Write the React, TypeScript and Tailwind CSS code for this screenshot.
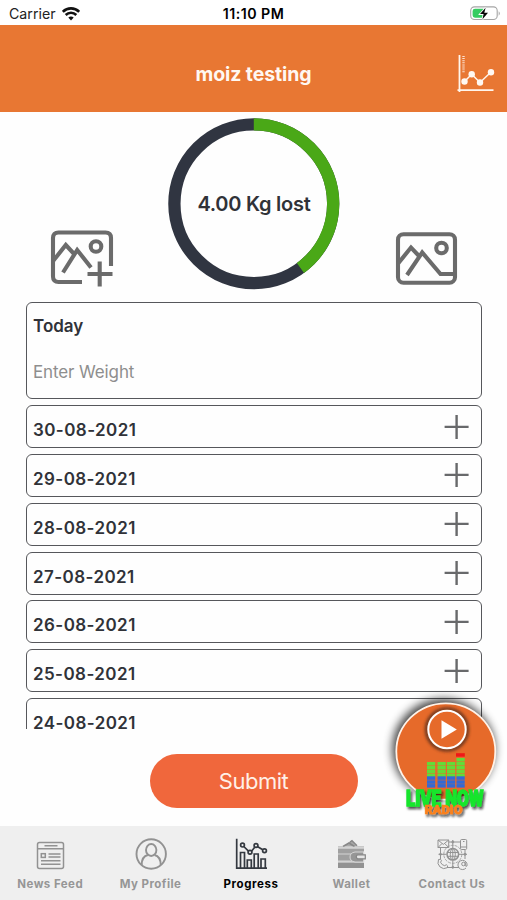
import type { ReactNode } from 'react';

const DATES = ['30-08-2021', '29-08-2021', '28-08-2021', '27-08-2021', '26-08-2021', '25-08-2021', '24-08-2021'];

function StatusBar() {
  return (
    <div className="grid h-[25px] shrink-0 grid-cols-3 items-center bg-white pt-[2px] text-black">
      <div className="flex items-center gap-[6px] pl-[9px]">
        <span className="text-[14.2px] leading-5 text-[#222]">Carrier</span>
        <svg width="18" height="14" viewBox="0 0 18 14" fill="none" stroke="#111" strokeWidth="2.6">
          <path d="M0.8 4.8C5.4 .2 12.6 .2 17.2 4.8" />
          <path d="M3.7 8C6.7 5 11.3 5 14.3 8" />
          <path d="M9 13.5 6.3 10.6Q9 8.5 11.7 10.6Z" fill="#111" stroke="none" />
        </svg>
      </div>
      <div className="text-center text-[14.2px] font-semibold leading-5 tracking-[0.5px]">11:10 PM</div>
      <div className="flex justify-end pr-[6px]">
        <svg width="31" height="15" viewBox="0 0 31 15">
          <rect x=".7" y=".9" width="26.5" height="12.6" rx="3.8" fill="white" stroke="#a5a5a5" strokeWidth="1.1" />
          <path d="M5 2.7h8.5v9H5a2.5 2.5 0 0 1-2.4-2.5V5A2.5 2.5 0 0 1 5 2.7" fill="#36cc61" />
          <path d="M28.7 5.2q2.2 2.2 0 4.5z" fill="#a5a5a5" />
          <path d="M15.6 1.8 10 8.1h3.6l-1.1 5.1 5.5-6.5h-3.7z" fill="#080808" stroke="white" strokeWidth="1.7" paintOrder="stroke" />
        </svg>
      </div>
    </div>
  );
}

function Header() {
  return (
    <header className="grid h-[87px] shrink-0 grid-cols-[80px_1fr_80px] items-center bg-[#e87733] pt-[11px]">
      <span />
      <h1 className="text-center text-[19.5px] font-bold leading-6 tracking-[-0.1px] text-[#fff8f2]">moiz testing</h1>
      <svg className="ml-[28px] mt-[2px]" width="40" height="40" viewBox="0 0 40 40" fill="none" stroke="#fff5ec">
        <path d="M4.5 0v37M2.5 35.2h36" strokeWidth="1.8" />
        <path d="M8.5 1v17" strokeWidth="2.4" strokeDasharray="1 1.1" opacity=".85" />
        <path d="M9.5 26.5 16.7 19.3 25 27.5 35.8 17.3" strokeWidth="1.5" />
        <g fill="#fff8f2" stroke="none">
          <circle cx="9.5" cy="26.5" r="3.2" />
          <circle cx="16.7" cy="19.3" r="3.2" />
          <circle cx="25" cy="27.5" r="3.2" />
          <circle cx="36" cy="17.3" r="3.2" />
        </g>
      </svg>
    </header>
  );
}

function AddPhotoIcon() {
  return (
    <svg width="66" height="60" viewBox="0 0 66 60" fill="none" stroke="#6b6b6b" strokeWidth="4.1">
      <path d="M32 53H8.5Q3 53 3 47.5V9q0-5.5 5.5-5.5h47q5.5 0 5.5 5.5v28" />
      <path d="M3.5 31.5 15.8 16 25 26" />
      <path d="M13 43.5 27.2 21 41 38.5" />
      <circle cx="46" cy="17.5" r="5.3" />
      <path d="M49.7 32.5v25M37.5 45H62.5" />
    </svg>
  );
}

function PhotoIcon() {
  return (
    <svg width="66" height="60" viewBox="0 0 66 60" fill="none" stroke="#6b6b6b" strokeWidth="4.1">
      <rect x="3" y="4.2" width="57" height="48.5" rx="5.5" />
      <path d="M3.5 33 16 17.5 24 26" />
      <path d="M12 45 27.2 22.5 45.5 44H60" />
      <circle cx="46.5" cy="18" r="5.3" />
    </svg>
  );
}

function Summary() {
  return (
    <section className="grid h-[189px] shrink-0 grid-cols-[168px_172px_167px]">
      <div className="pl-[50px] pt-[117px]"><AddPhotoIcon /></div>
      <div className="mt-[5px] grid h-[174px] place-items-center">
        <svg className="col-start-1 row-start-1" width="172" height="174" viewBox="0 0 172 174" fill="none" strokeWidth="12.3">
          <circle cx="85.8" cy="86.7" r="79.4" stroke="#303541" />
          <circle cx="85.8" cy="86.7" r="79.4" stroke="#4aa817" pathLength="100" strokeDasharray="40 60" transform="rotate(-90 85.8 86.7)" />
        </svg>
        <span className="col-start-1 row-start-1 whitespace-nowrap text-[20px] font-semibold leading-6 tracking-[-0.25px] text-[#303238]">4.00 Kg lost</span>
      </div>
      <div className="pl-[55px] pt-[118px]"><PhotoIcon /></div>
    </section>
  );
}

function DateRow({ date }: { date: string }) {
  return (
    <div className="mb-[5.8px] flex h-[43px] shrink-0 items-center justify-between rounded-[6px] border border-[#56575b] pl-[6px] pr-[11px]">
      <span className="pt-[7px] text-[17px] font-semibold leading-5 tracking-[0.42px] text-[#303238]">{date}</span>
      <svg width="26" height="26" viewBox="0 0 26 26" stroke="#68696b" strokeWidth="2.4">
        <path d="M12.6 .9v24M.6 12.9h24" />
      </svg>
    </div>
  );
}

function WeightLog() {
  return (
    <main className="ml-[26px] flex h-[428px] w-[455.5px] shrink-0 flex-col overflow-hidden pt-[0.6px]">
      <div className="mb-[5.8px] flex h-[97.8px] shrink-0 flex-col rounded-[6px] border border-[#56575b] pl-[6px] pt-[13px]">
        <span className="text-[17px] font-semibold leading-5 text-[#303238]">Today</span>
        <input aria-label="Weight" placeholder="Enter Weight" className="mt-[26px] h-[22px] w-52 text-[17px] tracking-[-0.12px] text-[#303238] outline-none placeholder:text-[#8e8e8e]" />
      </div>
      {DATES.map((date) => <DateRow key={date} date={date} />)}
    </main>
  );
}

function RadioButton() {
  const bars = [47, 57.5, 67, 76.5];
  return (
    <button aria-label="Live radio" className="absolute left-[380px] top-[690px]">
      <svg width="127" height="135" viewBox="0 0 127 135">
        <defs>
          <filter id="halo" x="-30%" y="-30%" width="160%" height="160%"><feGaussianBlur stdDeviation="5" /></filter>
          <filter id="soft" x="-30%" y="-50%" width="160%" height="200%"><feGaussianBlur stdDeviation="1.5" /></filter>
          <filter id="drop" x="-20%" y="-30%" width="140%" height="170%"><feDropShadow dx="1.6" dy="2.4" stdDeviation="1.2" floodColor="#111" floodOpacity=".75" /></filter>
        </defs>
        <ellipse cx="63.5" cy="59" rx="51" ry="50" fill="#000" opacity=".75" filter="url(#halo)" />
        <ellipse cx="65.8" cy="61.5" rx="49.5" ry="48.2" fill="#e66a2a" stroke="#fff2e8" strokeWidth="1.8" />
        <circle cx="67" cy="39.5" r="20.5" fill="none" stroke="#44251a" strokeWidth="3.5" opacity=".75" filter="url(#soft)" />
        <circle cx="67" cy="39.5" r="18.7" fill="#e66a2a" stroke="#fff" strokeWidth="2" />
        <path d="M61.5 30.3v18.4l15.3-9.2z" fill="#fff" />
        {bars.map((x, i) => (
          <g key={x}>
            {i === 3 && <path d="M76 63.2h8.8v3.5H76z" fill="#f01717" />}
            {(i === 3 ? [68, 72, 76, 80, 84] : [72, 76, 80, 84]).map((y) => <rect key={y} x={x} y={y} width="8.2" height="3.5" fill="#63db38" />)}
            {[86.3, 90.3, 94.1].map((y) => <rect key={y} x={x} y={y} width="8.2" height="3.5" fill="#3469d4" />)}
          </g>
        ))}
        <g fontFamily="Roboto, sans-serif" fontWeight="900" filter="url(#drop)">
          <text x="26" y="116.2" fontSize="22" textLength="77.5" lengthAdjust="spacingAndGlyphs" fill="#14e52d" stroke="#14e52d" strokeWidth="1.4">LIVE NOW</text>
          <text x="44.5" y="124" fontSize="13" textLength="38" lengthAdjust="spacingAndGlyphs" fill="#fb801b" stroke="#fb801b" strokeWidth=".6">RADIO</text>
        </g>
      </svg>
    </button>
  );
}

function NewsIcon() {
  return (
    <svg width="34" height="34" viewBox="0 0 34 34" fill="none" stroke="#929292" strokeWidth="1.5">
      <rect x="4.5" y="5.5" width="26" height="26" rx="2" />
      <path d="M4.5 11.7h26M11.5 8.8h13M15.5 16.9h12M15.5 20h12M8 23.7h19.5M8 27.3h19.5" />
      <rect x="8.3" y="16.7" width="4" height="3.7" />
    </svg>
  );
}

function ProfileIcon() {
  return (
    <svg width="34" height="34" viewBox="0 0 34 34" fill="none" stroke="#929292" strokeWidth="1.9">
      <circle cx="17.2" cy="17" r="14.7" />
      <ellipse cx="17.2" cy="13" rx="5.2" ry="6" />
      <path d="M7.7 28q0-8.6 6.2-10M26.7 28q0-8.6-6.2-10" />
    </svg>
  );
}

function ProgressIcon() {
  return (
    <svg width="34" height="34" viewBox="0 0 34 34" fill="none" stroke="#343940" strokeWidth="1.7">
      <path d="M2.7 1.8v29.3H33" />
      <path d="M6.5 31V15.5h4V31M13.3 31v-8h4v8M20.2 31V17h4v14M27 31v-9h4.3v9" />
      <path d="m9.8 9.5 4.7 4.7M17.5 14.2l3.2-4M23.3 9.5l5.5 3.3" />
      <circle cx="8.5" cy="8.1" r="1.9" />
      <circle cx="16" cy="15.3" r="1.9" />
      <circle cx="22" cy="8.5" r="1.9" />
      <circle cx="30.5" cy="13.8" r="1.9" />
    </svg>
  );
}

function WalletIcon() {
  return (
    <svg width="34" height="34" viewBox="0 0 34 34">
      <path d="m10.5 9 7-5.5 5 5.5z" fill="#a8a8a8" />
      <path d="m9 9.5 6-3.5 5.5 3.5M16 5.2l2-1.5 5 5" fill="none" stroke="#888" strokeWidth="1.5" />
      <path d="M4 9.5h26V31H4z" fill="#a0a0a0" />
      <path d="M4 10h26v1.8H4zM4 16.5h26v1H4zM4 23.5h26v2.3H4z" fill="#d3d3d3" />
      <path d="M4 25.8h26V31H4z" fill="#929292" />
      <path d="M30 15h-9q-5 .8-5 5t5 5h9z" fill="#969696" stroke="#d7d7d7" strokeWidth="1" />
      <path d="M30 14.5v11" stroke="#efefef" strokeWidth="1" />
      <path d="M23.5 17.8h7.8v4h-7.8q-2.5-2 0-4" fill="#e4e4e4" stroke="#858585" strokeWidth="1.2" />
    </svg>
  );
}

function ContactIcon() {
  return (
    <svg width="34" height="34" viewBox="0 0 34 34" fill="none" stroke="#929292" strokeWidth="1">
      <path d="M3 3h10.7v7.5H3zM3 3l5.3 4.4L13.7 3M3 10.5l4-4M13.7 10.5l-4-4" />
      <rect x="25.5" y="2.5" width="6.2" height="10" rx="1.2" />
      <path d="M26 10h5.5M14 5h11M5.5 11v11M30 13v9M12 30.5h12M17.8 3v8M17.8 24v7M3.5 17.3h8M24 17.3h8" />
      <circle cx="17.8" cy="17.3" r="9" strokeDasharray="3 1" opacity=".75" />
      <circle cx="17.8" cy="17.3" r="5.8" strokeWidth="1.5" />
      <ellipse cx="17.8" cy="17.3" rx="2.5" ry="5.8" />
      <path d="M12 15.5h11.6M12 19.3h11.6M17.8 11.5v11.6" />
      <path d="M3.5 22.5q2.5-1 3 1.2l-1 1.5q1.2 3 4.2 3.5l1.6-1q2.2 1 1 3-3.8 2.2-7.2-.7t-1.6-7.5" />
      <circle cx="28.5" cy="27" r="1.8" />
      <path d="M31 31a4.6 4.6 0 1 1 1-4.2v2.2q-1.4 1-1.8-.8v-3M28 4.5h1.5" />
      <circle cx="17.8" cy="5" r="1" />
      <circle cx="5.5" cy="17.3" r="1" />
      <circle cx="30" cy="17.3" r="1" />
      <circle cx="17.8" cy="30.3" r="1" />
    </svg>
  );
}

function Tab({ label, icon, active = false }: { label: string; icon: ReactNode; active?: boolean }) {
  return (
    <button className="flex flex-col items-center pt-[10.5px]">
      {icon}
      <span className={`mt-[5px] whitespace-nowrap text-[11.5px] leading-4 ${active ? 'font-bold tracking-[0.6px] text-black' : 'font-bold tracking-[0.45px] text-[#969696]'}`}>{label}</span>
    </button>
  );
}

export default function App() {
  return (
    <div className="relative flex h-[900px] w-[507px] flex-col overflow-hidden bg-[#fefefe] font-['Inter',sans-serif]">
      <StatusBar />
      <Header />
      <Summary />
      <WeightLog />
      <div className="flex h-[97px] shrink-0 justify-center pt-[25px]">
        <button className="h-[54px] w-[208px] rounded-full bg-[#f0673c] text-[22px] tracking-[-0.5px] text-[#fff0e8]">Submit</button>
      </div>
      <nav className="grid h-[74px] shrink-0 grid-cols-5 bg-[#efefef] pr-[5px]">
        <Tab label="News Feed" icon={<NewsIcon />} />
        <Tab label="My Profile" icon={<ProfileIcon />} />
        <Tab label="Progress" icon={<ProgressIcon />} active />
        <Tab label="Wallet" icon={<WalletIcon />} />
        <Tab label="Contact Us" icon={<ContactIcon />} />
      </nav>
      <RadioButton />
    </div>
  );
}
